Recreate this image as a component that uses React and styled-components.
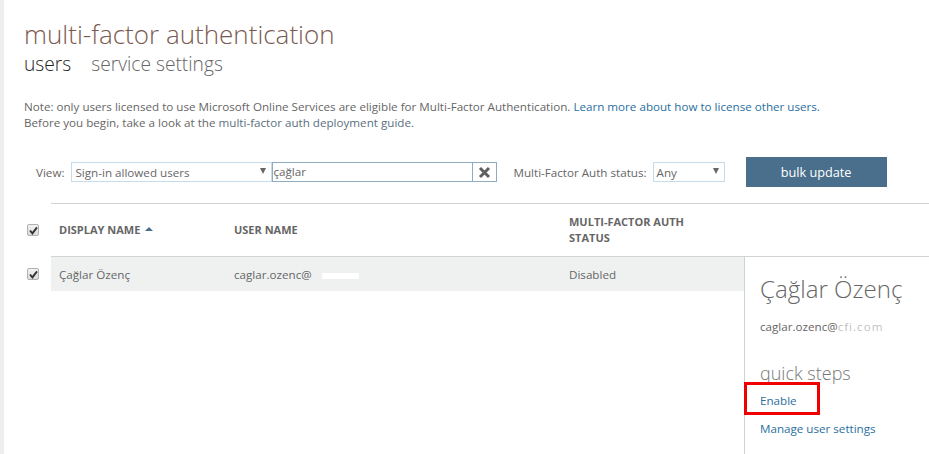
import styled, { createGlobalStyle } from "styled-components";

const GlobalStyle = createGlobalStyle`
  html, body {
    margin: 0;
    padding: 0;
    height: 100%;
    overflow: hidden;
    background: #fff;
  }
  body {
    font-family: "Open Sans", "Liberation Sans", sans-serif;
    color: #666;
  }
`;

let Page = styled.div`
  display: flex;
  width: 929px;
  height: 454px;
  overflow: hidden;
  border-left: 4px solid #eeeeee;
  box-sizing: border-box;
`;

let Main = styled.div`
  flex: 1;
  min-width: 0;
  display: flex;
  flex-direction: column;
`;

let Header = styled.div`
  padding: 17px 0 0 20px;
`;

let Title = styled.h1`
  margin: 0;
  font-size: 26px;
  font-weight: 300;
  line-height: 34px;
  color: #7a5a50;
`;

let Tabs = styled.div`
  display: flex;
  gap: 20px;
`;

let Tab = styled.span`
  font-size: 19.2px;
  line-height: 26px;
  font-weight: 300;
  color: ${(p) => (p.$active ? "#222" : "#666")};
`;

let Note = styled.p`
  margin: 22px 0 0;
  font-size: 11.63px;
  line-height: 16px;
  color: #666;
  white-space: nowrap;
`;

let Link = styled.a`
  color: ${(p) => (p.$dim ? "#5a6f80" : "#2a6f9e")};
  text-decoration: none;
`;

let Toolbar = styled.div`
  display: flex;
  align-items: center;
  height: 30px;
  margin-top: 26px;
  padding-left: 32px;
  font-size: 11.63px;
`;

let Label = styled.span`
  color: #666;
  margin-right: ${(p) => p.$gap}px;
  white-space: nowrap;
`;

let Select = styled.div`
  display: flex;
  align-items: center;
  justify-content: space-between;
  box-sizing: border-box;
  width: ${(p) => p.$width}px;
  height: 20px;
  padding: 0 5px 0 3px;
  border: 1px solid #c5dcec;
  color: #666;
`;

let Caret = styled.span`
  width: 0;
  height: 0;
  border-left: 3.5px solid transparent;
  border-right: 3.5px solid transparent;
  border-top: 6px solid #666;
  margin-top: -2px;
`;

let Search = styled.div`
  display: flex;
  box-sizing: border-box;
  width: 225px;
  height: 20px;
  margin-right: 16px;
  border: 1px solid #8fabc0;
`;

let SearchInput = styled.div`
  flex: 1;
  line-height: 18px;
  color: #666;
`;

let ClearButton = styled.div`
  width: 23px;
  display: flex;
  align-items: center;
  justify-content: center;
  border-left: 1px solid #8fabc0;
`;

let BulkButton = styled.button`
  width: 141px;
  height: 30px;
  margin-left: 21px;
  margin-top: -1px;
  padding: 0;
  border: 0;
  background: #4a6f8c;
  color: #fff;
  font-family: inherit;
  font-size: 12.7px;
  font-weight: 400;
`;

let HeadRow = styled.div`
  display: flex;
  align-items: center;
  height: 52px;
  margin: 16px 0 0 47px;
  border-top: 1px solid #d0d4d4;
  border-bottom: 1px solid #d0d4d4;
`;

let Check = styled.span`
  flex: none;
  box-sizing: border-box;
  width: 12px;
  height: 12px;
  margin-left: -24px;
  margin-right: 12px;
  display: flex;
  align-items: center;
  justify-content: center;
  background: linear-gradient(#f2f2f2, #dcdcdc);
  border: 1px solid #b0b0b0;
  border-radius: 2px;
`;

let HeadCell = styled.div`
  width: ${(p) => p.$width}px;
  padding-left: 8px;
  box-sizing: border-box;
  font-size: 11px;
  line-height: 16px;
  font-weight: 700;
  color: #666;
  display: flex;
  align-items: center;
  gap: 5px;
`;

let SortArrow = styled.span`
  width: 0;
  height: 0;
  border-left: 4px solid transparent;
  border-right: 4px solid transparent;
  border-bottom: 4px solid #4a6f8c;
  margin-top: -2px;
`;

let Body = styled.div`
  flex: 1;
  display: flex;
  margin-left: 47px;
  min-height: 0;
`;

let Rows = styled.div`
  width: 693px;
  flex: none;
`;

let Row = styled.div`
  display: flex;
  align-items: center;
  height: 34px;
  background: #eef1f0;
`;

let Cell = styled.div`
  width: ${(p) => p.$width}px;
  padding-left: 8px;
  box-sizing: border-box;
  font-size: 11.63px;
  color: #666;
  white-space: nowrap;
`;

let Redact = styled.span`
  display: inline-block;
  width: 37px;
  height: 6px;
  margin-left: 10px;
  background: #fff;
`;

let SidePanel = styled.div`
  flex: 1;
  border-left: 1px solid #ccd3d3;
  padding: 15px 0 0 15px;
  position: relative;
`;

let PanelName = styled.h2`
  margin: 0;
  font-size: 24.1px;
  font-weight: 300;
  line-height: 34px;
  color: #666;
  white-space: nowrap;
`;

let PanelMail = styled.div`
  margin-top: 13px;
  font-size: 11.63px;
  line-height: 16px;
  color: #666;
  white-space: nowrap;
`;

let Smudged = styled.span`
  opacity: 0.4;
  letter-spacing: 1px;
`;

let PanelHeading = styled.h3`
  margin: 25px 0 0;
  font-size: 18px;
  font-weight: 300;
  line-height: 26px;
  color: #777;
`;

let QuickLink = styled.a`
  display: block;
  margin-top: ${(p) => p.$top}px;
  font-size: 11.63px;
  line-height: 16px;
  color: #2a6f9e;
  white-space: nowrap;
`;

let Highlight = styled.div`
  position: absolute;
  left: -1px;
  top: 125px;
  width: 76px;
  height: 33px;
  box-sizing: border-box;
  border: 3px solid #f00000;
`;

function CheckMark() {
  return (
    <svg width="9" height="9" viewBox="0 0 9 9">
      <path d="M1 4.5 L3.4 7.4 L8 1.4" fill="none" stroke="#333" strokeWidth="1.9" />
    </svg>
  );
}

export default function App() {
  return (
    <Page>
      <GlobalStyle />
      <Main>
        <Header>
          <Title>multi-factor authentication</Title>
          <Tabs>
            <Tab $active>users</Tab>
            <Tab>service settings</Tab>
          </Tabs>
          <Note>
            Note: only users licensed to use Microsoft Online Services are eligible for Multi-Factor Authentication.{" "}
            <Link href="#">Learn more about how to license other users.</Link>
            <br />
            Before you begin, take a look at the <Link href="#" $dim>multi-factor auth deployment guide.</Link>
          </Note>
        </Header>
        <Toolbar>
          <Label $gap={7}>View:</Label>
          <Select $width={201}>
            Sign-in allowed users
            <Caret />
          </Select>
          <Search>
            <SearchInput>çağlar</SearchInput>
            <ClearButton>
              <svg width="13" height="13" viewBox="0 0 13 13">
                <path d="M2 2 L11 11 M11 2 L2 11" stroke="#5f5f5f" strokeWidth="3" />
              </svg>
            </ClearButton>
          </Search>
          <Label $gap={6}>Multi-Factor Auth status:</Label>
          <Select $width={72}>
            Any
            <Caret />
          </Select>
          <BulkButton>bulk update</BulkButton>
        </Toolbar>
        <HeadRow>
          <Check><CheckMark /></Check>
          <HeadCell $width={175}>
            DISPLAY NAME <SortArrow />
          </HeadCell>
          <HeadCell $width={335}>USER NAME</HeadCell>
          <HeadCell $width={170}>MULTI-FACTOR AUTH<br />STATUS</HeadCell>
        </HeadRow>
        <Body>
          <Rows>
            <Row>
              <Check><CheckMark /></Check>
              <Cell $width={175}>Çağlar Özenç</Cell>
              <Cell $width={335}>caglar.ozenc@<Redact /></Cell>
              <Cell $width={170}>Disabled</Cell>
            </Row>
          </Rows>
          <SidePanel>
            <PanelName>Çağlar Özenç</PanelName>
            <PanelMail>caglar.ozenc@<Smudged>cfi.com</Smudged></PanelMail>
            <PanelHeading>quick steps</PanelHeading>
            <QuickLink $top={7}>Enable</QuickLink>
            <QuickLink $top={12}>Manage user settings</QuickLink>
            <Highlight />
          </SidePanel>
        </Body>
      </Main>
    </Page>
  );
}
